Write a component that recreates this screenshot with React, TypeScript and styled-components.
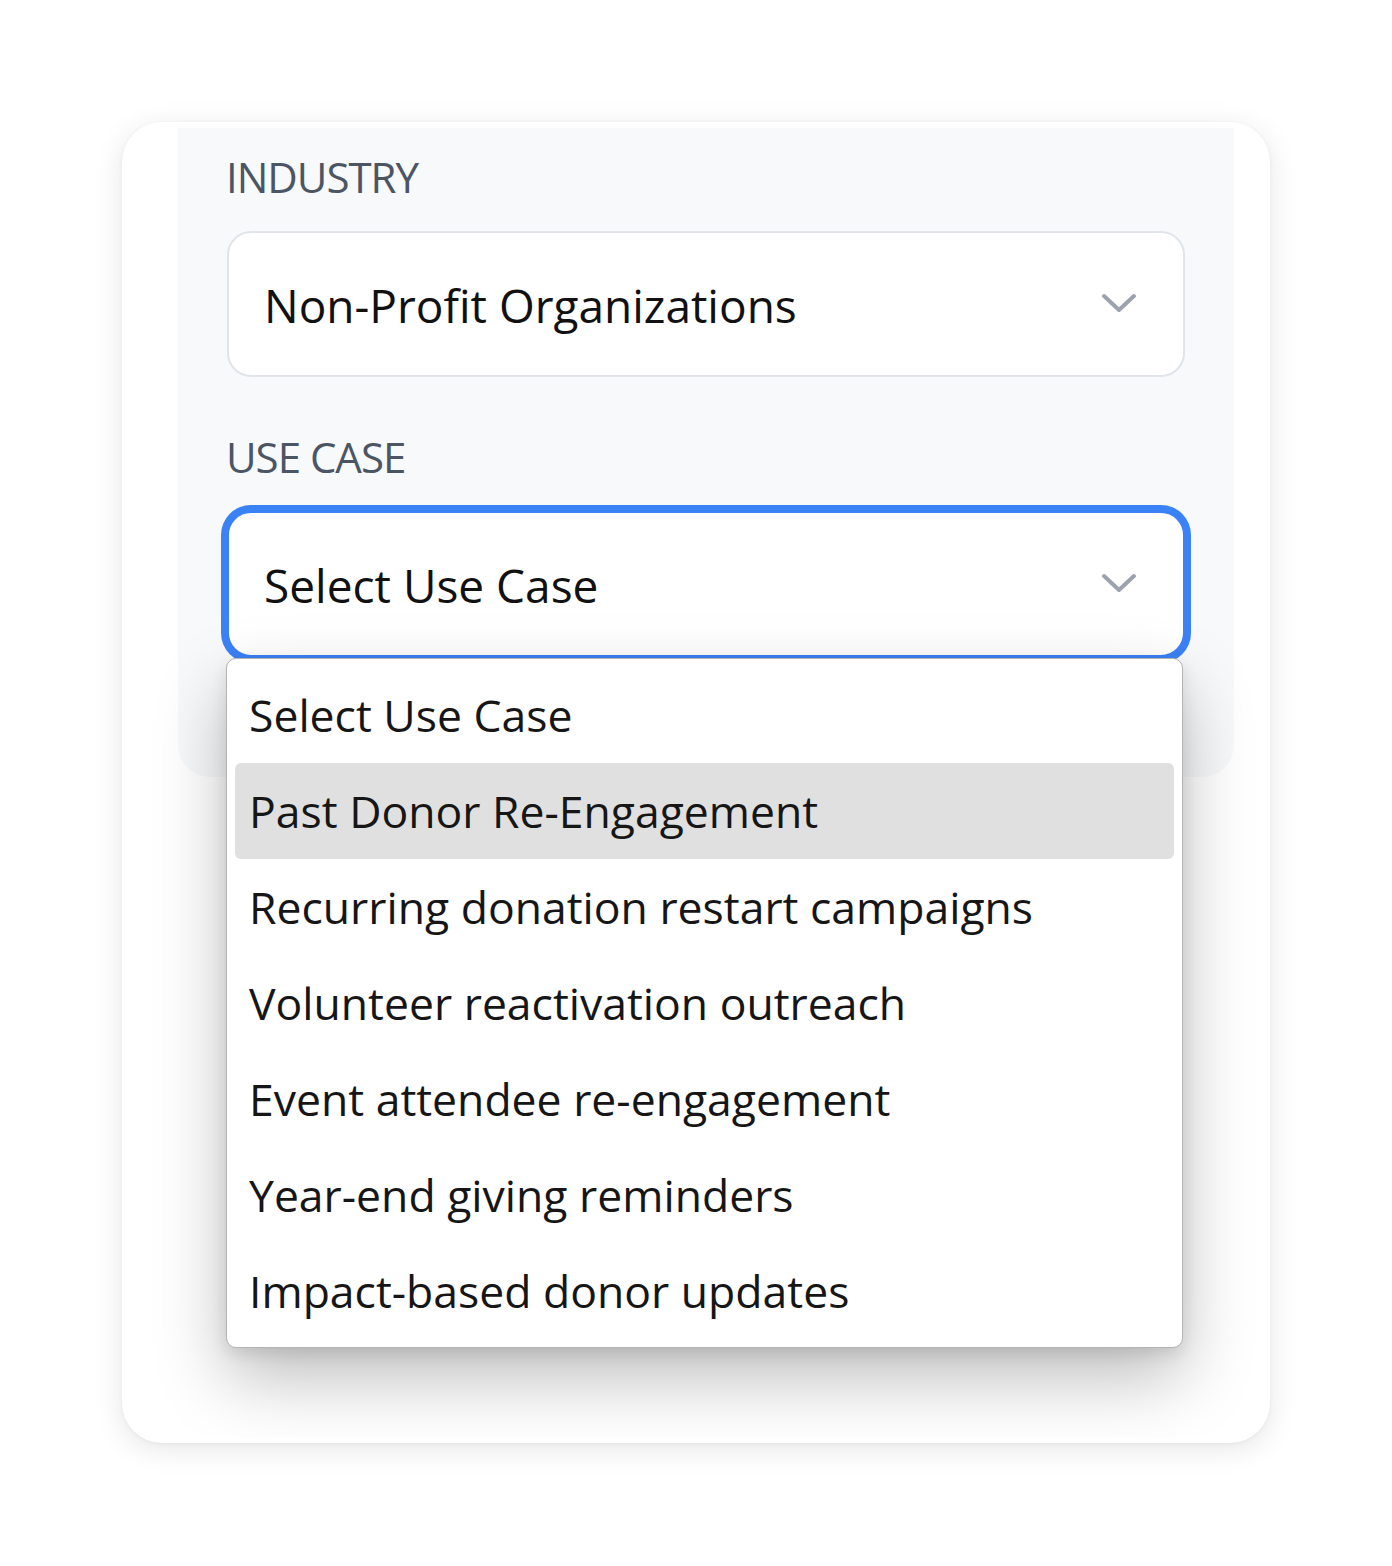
import styled, { createGlobalStyle } from 'styled-components';

const GlobalStyle = createGlobalStyle`
    html,
    body {
        margin: 0;
        padding: 0;
        background: #ffffff;
    }
    body {
        font-family: 'Open Sans', 'Noto Sans', Arial, sans-serif;
    }
`;

const Page = styled.div`
    padding: 122px;
    width: 1392px;
    height: 1566px;
    box-sizing: border-box;
`;

const Frame = styled.div`
    width: 1148px;
    height: 1321px;
    box-sizing: border-box;
    padding: 6px;
    border-radius: 40px;
    background: #ffffff;
    box-shadow: 0 6px 30px rgba(0, 0, 0, 0.1), 0 1px 4px rgba(0, 0, 0, 0.05);
`;

const Viewport = styled.div`
    height: 100%;
    border-radius: 34px;
    overflow: hidden;
    padding-left: 50px;
`;

const Panel = styled.div`
    width: 1056px;
    height: 649px;
    box-sizing: border-box;
    padding: 24px 49px 0 49px;
    background: #f8f9fb;
    border-radius: 0 0 32px 32px;
    display: flex;
    flex-direction: column;
    gap: 55px;
`;

const Field = styled.div`
    display: flex;
    flex-direction: column;
    gap: 29px;
`;

const Label = styled.div`
    font-size: 42px;
    line-height: 50px;
    letter-spacing: -1px;
    color: #4b5563;
    text-transform: uppercase;
    margin-left: -1px;
`;

const SelectWrap = styled.div`
    position: relative;
`;

const SelectBox = styled.div<{ $focused?: boolean }>`
    height: 146px;
    box-sizing: border-box;
    display: flex;
    align-items: center;
    justify-content: space-between;
    padding: 2px 46px 0 35px;
    background: #ffffff;
    border: 2px solid ${(p) => (p.$focused ? '#3b82f6' : '#e1e4e8')};
    border-radius: 24px;
    box-shadow: ${(p) => (p.$focused ? '0 0 0 6px #3b82f6' : 'none')};
    font-size: 46px;
    line-height: 55px;
    color: #111111;
`;

const Chevron = styled.svg`
    width: 36px;
    height: 21px;
    margin-top: -4px;
    flex-shrink: 0;
`;

const Menu = styled.ul`
    position: absolute;
    top: 147px;
    left: -1px;
    width: 957px;
    box-sizing: border-box;
    margin: 0;
    padding: 8px;
    list-style: none;
    background: #ffffff;
    border: 1px solid #b4b4b4;
    border-radius: 10px;
    box-shadow: 0 30px 70px rgba(0, 0, 0, 0.26), 0 6px 16px rgba(0, 0, 0, 0.1);
    z-index: 2;
`;

const Option = styled.li<{ $active?: boolean }>`
    height: 96px;
    padding: 0 14px;
    border-radius: 6px;
    font-size: 44.5px;
    line-height: 96px;
    color: #161616;
    white-space: nowrap;
    background: ${(p) => (p.$active ? '#e0e0e0' : 'transparent')};
`;

const ChevronIcon = () => (
    <Chevron viewBox="0 0 36 21" fill="none">
        <path d="M3 3 L18 17 L33 3" stroke="#9ca3af" strokeWidth="4" strokeLinecap="round" strokeLinejoin="round" />
    </Chevron>
);

const useCases = [
    'Select Use Case',
    'Past Donor Re-Engagement',
    'Recurring donation restart campaigns',
    'Volunteer reactivation outreach',
    'Event attendee re-engagement',
    'Year-end giving reminders',
    'Impact-based donor updates',
];

const App = () => {
    return (
        <Page>
            <GlobalStyle />
            <Frame>
                <Viewport>
                    <Panel>
                        <Field>
                            <Label>Industry</Label>
                            <SelectBox>
                                <span>Non-Profit Organizations</span>
                                <ChevronIcon />
                            </SelectBox>
                        </Field>
                        <Field>
                            <Label>Use Case</Label>
                            <SelectWrap>
                                <SelectBox $focused>
                                    <span>Select Use Case</span>
                                    <ChevronIcon />
                                </SelectBox>
                                <Menu>
                                    {useCases.map((item, i) => (
                                        <Option key={item} $active={i === 1}>
                                            {item}
                                        </Option>
                                    ))}
                                </Menu>
                            </SelectWrap>
                        </Field>
                    </Panel>
                </Viewport>
            </Frame>
        </Page>
    );
};

export default App;
